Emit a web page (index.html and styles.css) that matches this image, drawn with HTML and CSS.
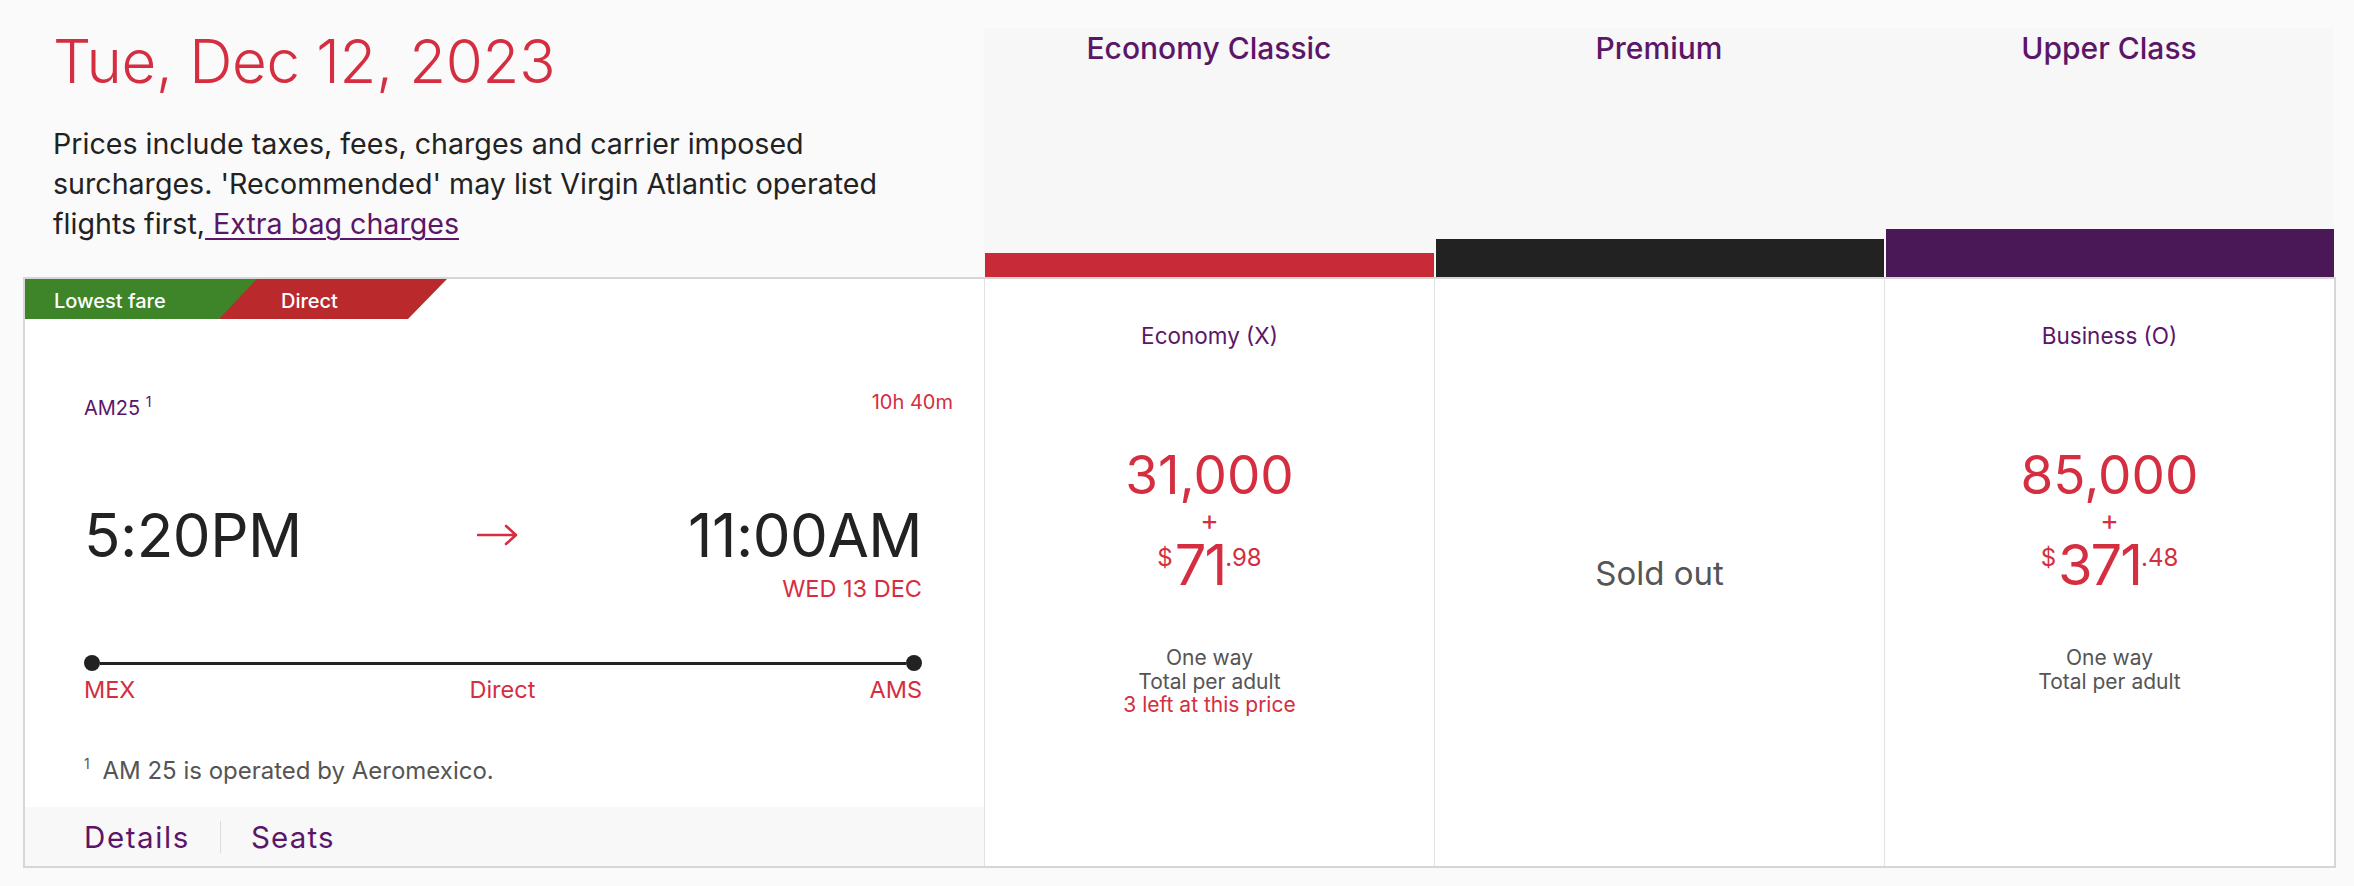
FILE: index.html
```html
<!DOCTYPE html>
<html lang="en">
<head>
<meta charset="utf-8">
<title>Flight results</title>
<link rel="stylesheet" href="styles.css">
</head>
<body>
<main class="board">
  <div class="head-row">
    <header class="intro">
      <h1 class="date">Tue, Dec 12, 2023</h1>
      <p class="note">Prices include taxes, fees, charges and carrier imposed surcharges. 'Recommended' may list Virgin Atlantic operated flights first,<a class="note-link" href="#"> Extra bag charges</a></p>
    </header>
    <div class="cabin-head">
      <div class="cabin-name">Economy Classic</div>
      <div class="cabin-bar bar-economy"></div>
    </div>
    <div class="cabin-head">
      <div class="cabin-name">Premium</div>
      <div class="cabin-bar bar-premium"></div>
    </div>
    <div class="cabin-head">
      <div class="cabin-name">Upper Class</div>
      <div class="cabin-bar bar-upper"></div>
    </div>
  </div>

  <div class="result-row">
    <section class="flight">
      <div class="tags">
        <span class="tag tag-green">Lowest fare</span>
        <span class="tag tag-red">Direct</span>
      </div>
      <div class="flight-body">
        <div class="flight-meta">
          <span class="flight-no">AM25 <sup>1</sup></span>
          <span class="duration">10h 40m</span>
        </div>
        <div class="times">
          <span class="time">5:20PM</span>
          <svg class="arrow" width="42" height="24" viewBox="0 0 42 24" aria-hidden="true">
            <path d="M1 12 H39 M29 3 L39 12 L29 21" fill="none" stroke="#d42e40" stroke-width="2.6" stroke-linecap="round" stroke-linejoin="round"/>
          </svg>
          <span class="time">11:00AM</span>
        </div>
        <div class="arrive-date">WED 13 DEC</div>
        <div class="route">
          <span class="dot"></span>
          <span class="line"></span>
          <span class="dot"></span>
        </div>
        <div class="airports">
          <span>MEX</span>
          <span>Direct</span>
          <span>AMS</span>
        </div>
        <p class="footnote"><sup>1</sup> AM 25 is operated by Aeromexico.</p>
      </div>
      <div class="flight-foot">
        <a class="foot-link" href="#">Details</a>
        <span class="foot-sep"></span>
        <a class="foot-link" href="#">Seats</a>
      </div>
    </section>

    <section class="fare">
      <div class="fare-class">Economy (X)</div>
      <div class="points">31,000</div>
      <div class="plus">+</div>
      <div class="cash"><span class="cur">$</span><span class="whole">71</span><span class="cents">.98</span></div>
      <div class="fare-info">
        <div>One way</div>
        <div>Total per adult</div>
        <div class="left">3 left at this price</div>
      </div>
    </section>

    <section class="fare fare-sold">
      <div class="sold">Sold out</div>
    </section>

    <section class="fare">
      <div class="fare-class">Business (O)</div>
      <div class="points">85,000</div>
      <div class="plus">+</div>
      <div class="cash"><span class="cur">$</span><span class="whole">371</span><span class="cents">.48</span></div>
      <div class="fare-info">
        <div>One way</div>
        <div>Total per adult</div>
      </div>
    </section>
  </div>
</main>
</body>
</html>
```

FILE: styles.css
```css
* { box-sizing: border-box; }

html, body {
  margin: 0;
  padding: 0;
  background: #fafafa;
  font-family: Inter, "Noto Sans", sans-serif;
  color: #222;
}

.board {
  width: 2313px;
  margin-left: 23px;
}

.head-row {
  display: grid;
  grid-template-columns: 961px 450px 450px 450px;
  height: 277px;
}

.intro {
  padding: 16px 30px 0 30px;
}

.date {
  margin: 0;
  font-weight: 300;
  font-size: 60px;
  line-height: 90px;
  color: #d42e40;
  letter-spacing: -0.3px;
}

.note {
  margin: 18px 0 0 0;
  width: 880px;
  font-size: 28.6px;
  line-height: 40px;
  color: #222;
}

.note-link {
  color: #5b1668;
  text-decoration: underline;
  text-underline-offset: 4px;
  text-decoration-thickness: 2px;
}

.cabin-head {
  margin-top: 28px;
  background: #f7f7f7;
  display: flex;
  flex-direction: column;
  justify-content: space-between;
  align-items: stretch;
}

.cabin-name {
  text-align: center;
  font-size: 30px;
  font-weight: 500;
  color: #5b1668;
  line-height: 40px;
}

.cabin-bar { margin-left: 1px; }
.bar-economy { height: 24px; background: #c82a38; }
.bar-premium { height: 38px; background: #222222; margin-left: 2px; }
.bar-upper { height: 48px; background: #4a1856; margin-left: 2px; }

.result-row {
  display: grid;
  grid-template-columns: 959px 450px 450px 450px;
  border: 2px solid #d6d6d6;
  background: #fff;
  height: 591px;
}

/* Flight card */
.flight {
  display: flex;
  flex-direction: column;
}

.tags {
  display: flex;
  height: 40px;
}

.tag {
  display: flex;
  align-items: center;
  color: #fff;
  font-size: 20px;
  font-weight: 500;
  padding-top: 3px;
}

.tag-green {
  background: #3e8428;
  width: 232px;
  padding-left: 29px;
  clip-path: polygon(0 0, 100% 0, 194px 100%, 0 100%);
  position: relative;
  z-index: 1;
}

.tag-red {
  background: #ba2a2c;
  width: 230px;
  margin-left: -40px;
  padding-left: 64px;
  clip-path: polygon(38px 0, 100% 0, 191px 100%, 0 100%);
}

.flight-body {
  flex: 1;
  padding: 0 62px 0 59px;
}

.flight-meta {
  display: flex;
  justify-content: space-between;
  margin-top: 69px;
  font-size: 20px;
  line-height: 28px;
  margin-right: -31px;
}

.flight-no { color: #5b1668; }
.flight-no sup { font-size: 14px; vertical-align: 8px; }
.duration { color: #d42e40; }

.times {
  display: flex;
  justify-content: space-between;
  align-items: center;
  margin-top: 83px;
  height: 60px;
}

.time {
  font-size: 60px;
  line-height: 60px;
  color: #222;
  letter-spacing: -0.5px;
}

.arrow {
  display: block;
  margin-left: 6px;
}

.arrive-date {
  text-align: right;
  color: #d42e40;
  font-size: 23.5px;
  line-height: 28px;
  margin-top: 10px;
}

.route {
  display: flex;
  align-items: center;
  margin-top: 52px;
  height: 16px;
}

.dot {
  width: 16px;
  height: 16px;
  border-radius: 50%;
  background: #222;
  flex: none;
}

.line {
  flex: 1;
  height: 3px;
  background: #222;
}

.airports {
  display: flex;
  justify-content: space-between;
  color: #d42e40;
  font-size: 23.5px;
  line-height: 30px;
  margin-top: 4px;
}

.footnote {
  margin: 44px 0 0 0;
  color: #555;
  font-size: 24px;
  line-height: 30px;
}

.footnote sup { font-size: 14px; vertical-align: 10px; margin-right: 6px; }

.flight-foot {
  height: 59px;
  background: #f8f8f8;
  display: flex;
  align-items: center;
  padding-left: 59px;
}

.foot-link {
  color: #5b1668;
  text-decoration: none;
  font-size: 29.5px;
  letter-spacing: 1.6px;
}

.foot-link + .foot-sep + .foot-link { letter-spacing: 1.2px; }

.foot-sep {
  width: 1px;
  height: 32px;
  background: #dcdcdc;
  margin: 0 30px 0 30px;
}

/* Fare columns */
.fare {
  border-left: 1px solid #e2e2e2;
  display: flex;
  flex-direction: column;
  align-items: center;
  text-align: center;
}

.fare:first-of-type { border-left: 2px solid #dcdcdc; }

.fare-class {
  margin-top: 43px;
  color: #5b1668;
  font-size: 22.5px;
  line-height: 28px;
}

.points {
  margin-top: 95px;
  color: #d42e40;
  font-size: 53px;
  line-height: 60px;
}

.plus {
  color: #d42e40;
  font-size: 28px;
  line-height: 24px;
  margin-top: 3px;
}

.cash {
  display: flex;
  align-items: flex-start;
  color: #d42e40;
  line-height: 1;
  margin-top: 8px;
}

.cur { font-size: 24px; margin-top: 6px; margin-right: 2px; }
.whole { font-size: 56px; line-height: 50px; letter-spacing: -2px; }
.cents { font-size: 24px; margin-top: 6px; }

.fare-info {
  margin-top: 56px;
  color: #555;
  font-size: 21px;
  line-height: 23.5px;
}

.fare-info .left { color: #d42e40; }

.fare-sold { justify-content: center; }

.sold {
  color: #555;
  font-size: 33px;
  line-height: 40px;
}
```
